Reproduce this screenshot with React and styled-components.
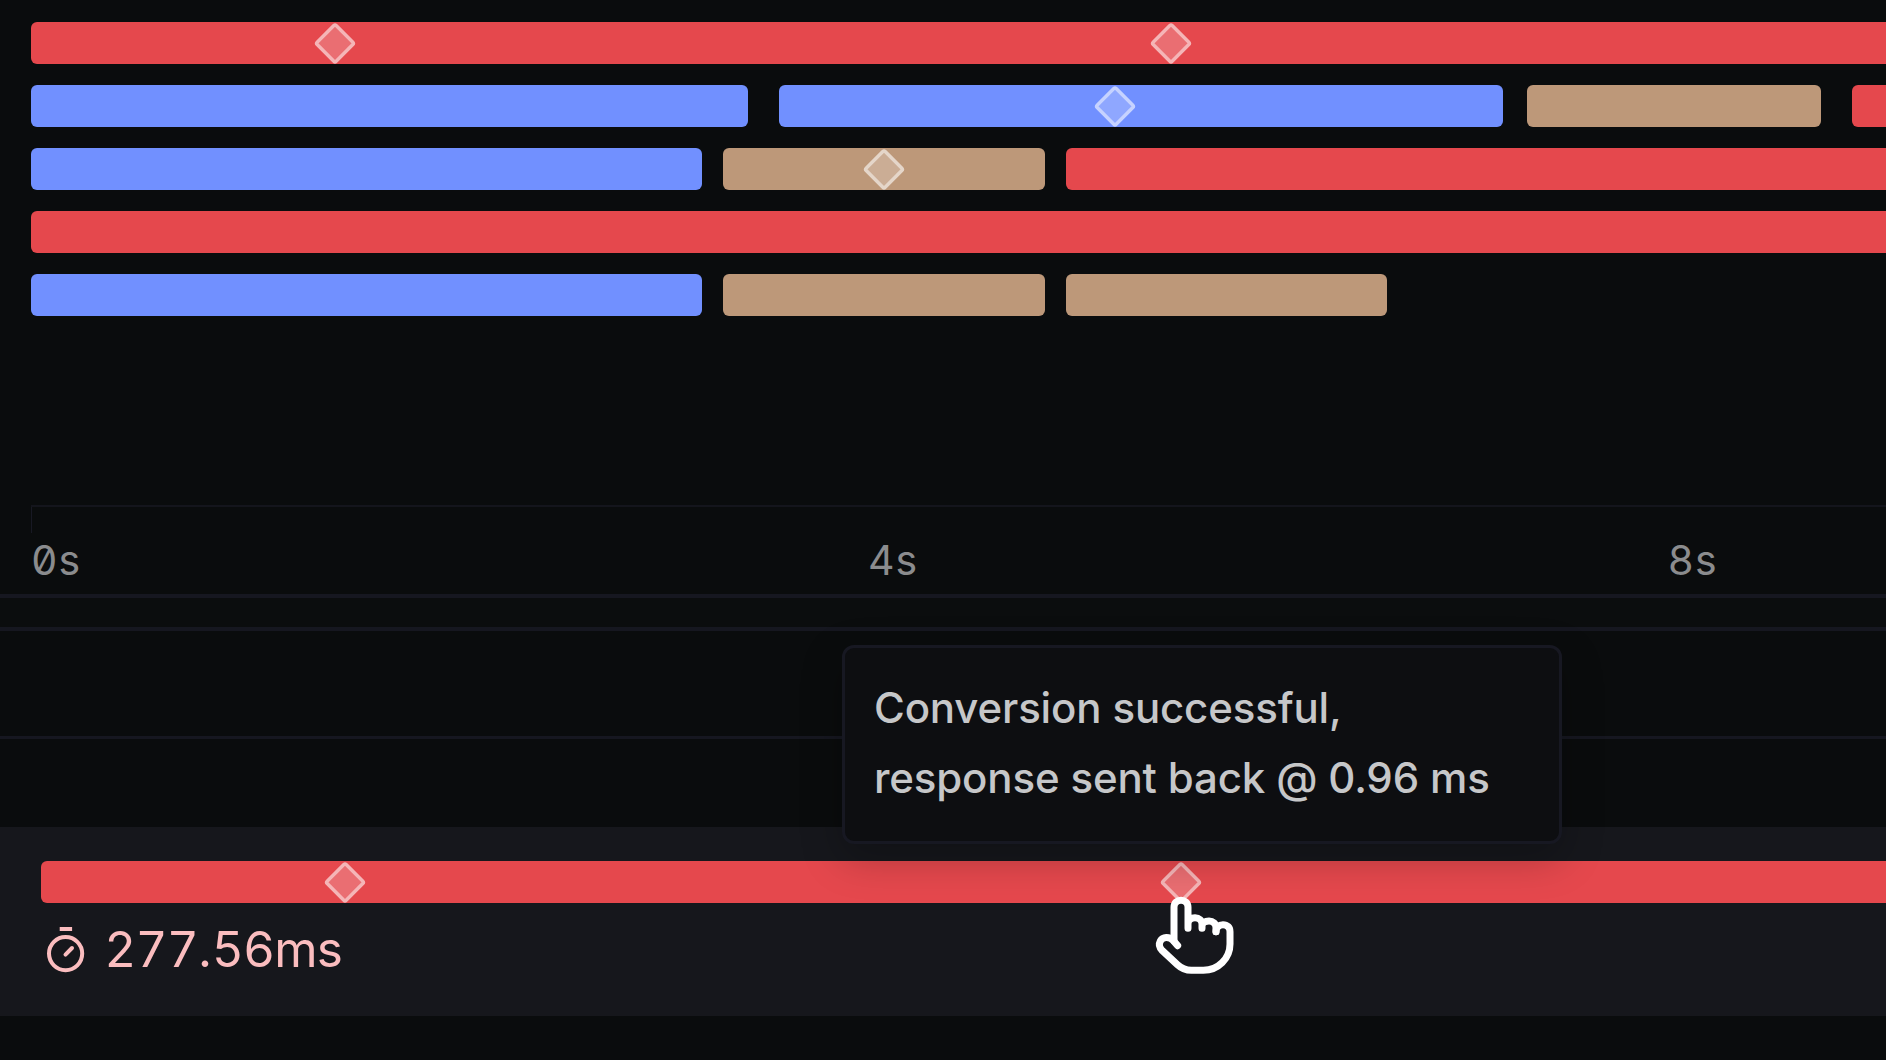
import React from "react";
import styled, { createGlobalStyle } from "styled-components";

const colors = {
  red: "#e5484d",
  blue: "#7190ff",
  tan: "#bd9879",
};

const GlobalStyle = createGlobalStyle`
  *, *::before, *::after { box-sizing: border-box; }
  body { margin: 0; background: #0a0c0d; overflow: hidden; }
`;

const Screen = styled.main`
  position: relative;
  display: flex;
  flex-direction: column;
  width: 1886px;
  height: 1060px;
  overflow: hidden;
  background: #0a0c0d;
  font-family: Inter, "Liberation Sans", sans-serif;
`;

const FlameGraph = styled.section`
  display: flex;
  flex-direction: column;
  gap: 20.8px;
  height: 505px;
  padding: 22.4px 0 0 30.7px;
`;

const Track = styled.div`
  display: flex;
  height: 42.1px;
  flex: none;
`;

const Span = styled.div`
  position: relative;
  flex: none;
  width: ${(p) => p.$width}px;
  height: 42.1px;
  margin-left: ${(p) => p.$gap || 0}px;
  border-radius: 6px;
  background: ${(p) => colors[p.$tone]};
`;

const MarkerIcon = styled.svg`
  position: absolute;
  top: 0;
  left: ${(p) => p.$at - 21}px;
  width: 42px;
  height: 42px;
`;

const Axis = styled.div`
  display: flex;
  flex-direction: column;
  height: 89px;
  margin-left: 31px;
  border-top: 2px solid #14151c;
`;

const Tick = styled.div`
  width: 1px;
  height: 26px;
  background: #181924;
`;

const AxisLabels = styled.div`
  display: flex;
  height: 54px;
  align-items: center;
`;

const AxisLabel = styled.span`
  flex: none;
  width: ${(p) => p.$width}px;
  color: #8b8c8e;
  font-size: 41px;
  font-weight: 400;
  line-height: 52px;
  font-feature-settings: "tnum", "zero";
  white-space: nowrap;
`;

const Cell = styled.span`
  display: inline-block;
  width: ${(p) => p.$width}px;
  text-align: center;
`;

const Band = styled.div`
  height: ${(p) => p.$height}px;
  border-top: ${(p) => p.$line}px solid #161720;
  background: ${(p) => p.$fill || "transparent"};
`;

const ActiveRow = styled.section`
  display: flex;
  flex-direction: column;
  height: 189px;
  padding: 34.3px 0 0 40.6px;
  background: #16171c;
`;

const Duration = styled.div`
  display: flex;
  align-items: center;
  height: 60px;
  margin-top: 16.7px;
  padding-left: 5px;
  color: #fbbdbf;
`;

const TimerIcon = styled.svg`
  flex: none;
  width: 40px;
  height: 50px;
`;

const DurationText = styled.span`
  margin: -2px 0 0 18.6px;
  font-size: 49.5px;
  font-weight: 400;
  line-height: 60px;
  font-feature-settings: "tnum";
  white-space: nowrap;
`;

const Tooltip = styled.aside`
  position: absolute;
  left: 842px;
  top: 645px;
  width: 720px;
  height: 199px;
  padding: 25px 29px;
  border: 3px solid #171822;
  border-radius: 12px;
  background: #0d0e11;
  box-shadow: 0 14px 40px rgba(0, 0, 0, 0.25);
  color: #c6c7c9;
  font-size: 42px;
  font-weight: 500;
  letter-spacing: -0.15px;
  line-height: 70px;
  white-space: nowrap;
`;

const Pointer = styled.svg`
  position: absolute;
  left: 1120px;
  top: 840px;
  width: 160px;
  height: 160px;
  pointer-events: none;
`;

const tracks = [
  [{ tone: "red", width: 1880, marks: [304.1, 1140.4] }],
  [
    { tone: "blue", width: 716.9 },
    { tone: "blue", width: 724, gap: 31, marks: [336.4] },
    { tone: "tan", width: 294, gap: 24.3 },
    { tone: "red", width: 60, gap: 31.6 },
  ],
  [
    { tone: "blue", width: 671.4 },
    { tone: "tan", width: 322, gap: 20.8, marks: [160.7] },
    { tone: "red", width: 860, gap: 20.8 },
  ],
  [{ tone: "red", width: 1880 }],
  [
    { tone: "blue", width: 671.4 },
    { tone: "tan", width: 322, gap: 20.8 },
    { tone: "tan", width: 321.6, gap: 20.8 },
  ],
];

const ticks = [
  { text: "0s", width: 837 },
  { text: "4s", width: 799.5 },
  { text: "8s", width: 60 },
];

const durationAdvance = { ".": 13.6, m: 42.4, s: 25 };

function Marker({ at }) {
  return (
    <MarkerIcon $at={at} viewBox="0 0 42 42" fill="none">
      <g transform="translate(0 0.4) rotate(45 21 21)">
        <rect x="9.3" y="9.3" width="23.4" height="23.4" fill="#fff" fillOpacity="0.21" />
        <rect x="7.6" y="7.6" width="26.8" height="26.8" rx="1.6" stroke="#fff" strokeOpacity="0.6" strokeWidth="3.5" />
      </g>
    </MarkerIcon>
  );
}

function Glyphs({ text, advance }) {
  return [...text].map((ch, i) => (
    <Cell key={i} $width={advance(ch)}>{ch}</Cell>
  ));
}

export default function App() {
  return (
    <>
      <GlobalStyle />
      <Screen>
        <FlameGraph>
          {tracks.map((spans, row) => (
            <Track key={row}>
              {spans.map((s, i) => (
                <Span key={i} $tone={s.tone} $width={s.width} $gap={s.gap}>
                  {(s.marks || []).map((at) => <Marker key={at} at={at} />)}
                </Span>
              ))}
            </Track>
          ))}
        </FlameGraph>
        <Axis>
          <Tick />
          <AxisLabels>
            {ticks.map((t) => (
              <AxisLabel key={t.text} $width={t.width}>
                <Glyphs text={t.text} advance={() => 25.5} />
              </AxisLabel>
            ))}
          </AxisLabels>
        </Axis>
        <Band $line={4} $height={33} $fill="#0b0d0e" />
        <Band $line={4} $height={109} />
        <Band $line={3} $height={91} />
        <ActiveRow>
          <Span $tone="red" $width={1880}>
            <Marker at={304.6} />
            <Marker at={1140.5} />
          </Span>
          <Duration>
            <TimerIcon viewBox="0 0 40 50" fill="none" stroke="currentColor" strokeWidth="4">
              <path d="M13.7 4H26.1" />
              <circle cx="19.6" cy="28.6" r="16.6" />
              <path d="M19.5 29.6L26 23" strokeLinecap="round" />
            </TimerIcon>
            <DurationText>
              <Glyphs text="277.56ms" advance={(ch) => durationAdvance[ch] || 31.3} />
            </DurationText>
          </Duration>
        </ActiveRow>
        <Tooltip>
          Conversion successful,
          <br />
          response sent back @ 0.96 ms
        </Tooltip>
        <Pointer viewBox="0 0 480 480" fill="none" stroke="#fff" strokeWidth="21" strokeLinecap="round" strokeLinejoin="round">
          <path d="M173 317L160 302C148 289 128 290 121 303C115 314 119 324 127 332L172 374C185 386 200 391 214 391H250C295 391 330 355 330 312V275C330 262 322 254 309 254C297 254 288 262 288 275" />
          <path d="M162 302V202C162 188 171 181 183 181C195 181 204 188 204 202V265V252C204 239 214 233 225 233C237 233 246 241 246 253V265V259C246 249 255 243 267 243C279 243 288 251 288 264V275" />
        </Pointer>
      </Screen>
    </>
  );
}
